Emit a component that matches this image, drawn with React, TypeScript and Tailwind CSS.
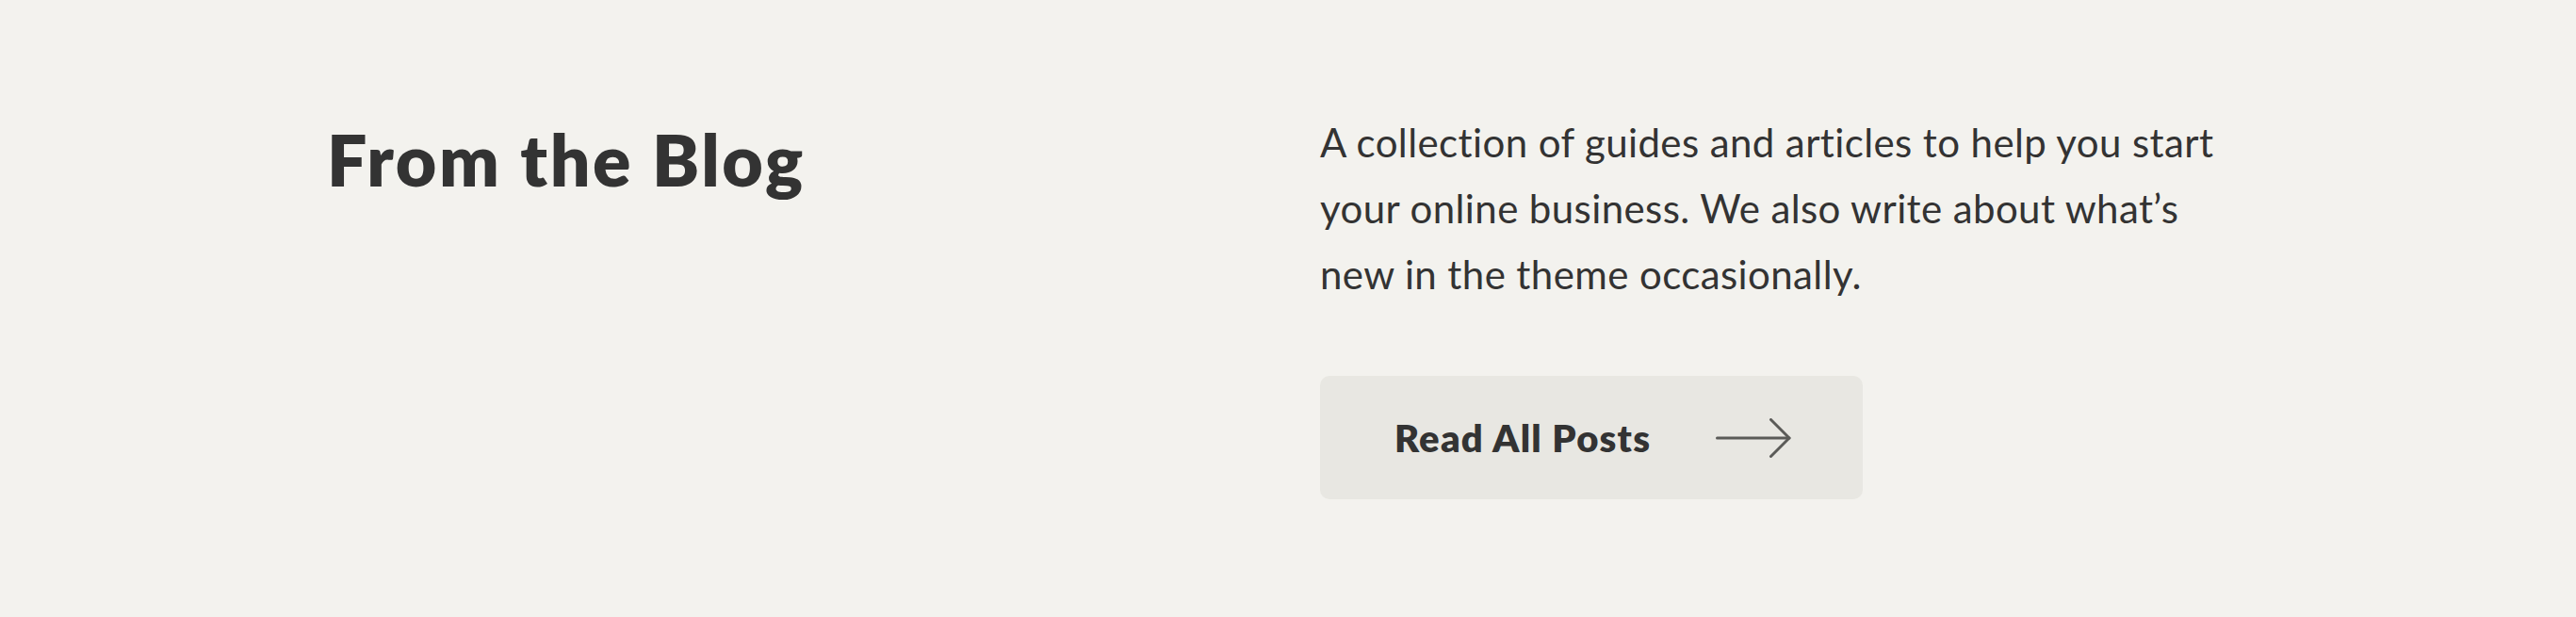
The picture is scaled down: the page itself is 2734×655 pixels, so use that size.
import React from "react";

function ArrowRight() {
  return (
    <svg
      width="80"
      height="42"
      viewBox="0 0 80 42"
      fill="none"
      stroke="#5b5b58"
      strokeWidth="3"
      strokeLinecap="round"
      strokeLinejoin="round"
      aria-hidden="true"
    >
      <path d="M1.5 21H78" />
      <path d="M58.5 1.5L78 21L58.5 40.5" />
    </svg>
  );
}

export default function App() {
  return (
    <div className="min-h-[655px] w-full bg-[#f3f2ee] text-[#333333] [font-family:Lato,'Open_Sans',sans-serif]">
      <section className="mx-auto grid w-[2040px] grid-cols-2 gap-x-[68px] pt-[116px]">
        <h2 className="mt-[16px] text-[75px] leading-none font-extrabold tracking-[2.6px]">From the Blog</h2>

        <div>
          <p className="max-w-[975px] text-[42px] leading-[70px] font-normal tracking-[0.4px]">
            A collection of guides and articles to help you start your online business. We also
            write about what’s new in the theme occasionally.
          </p>

          <a
            href="#"
            className="mt-[73px] flex h-[131px] w-[576px] items-center justify-between rounded-[10px] bg-[#e8e7e2] pr-[76px] pl-[79px]"
          >
            <span className="text-[40px] leading-none font-extrabold tracking-[1.2px]">Read All Posts</span>
            <ArrowRight />
          </a>
        </div>
      </section>
    </div>
  );
}
